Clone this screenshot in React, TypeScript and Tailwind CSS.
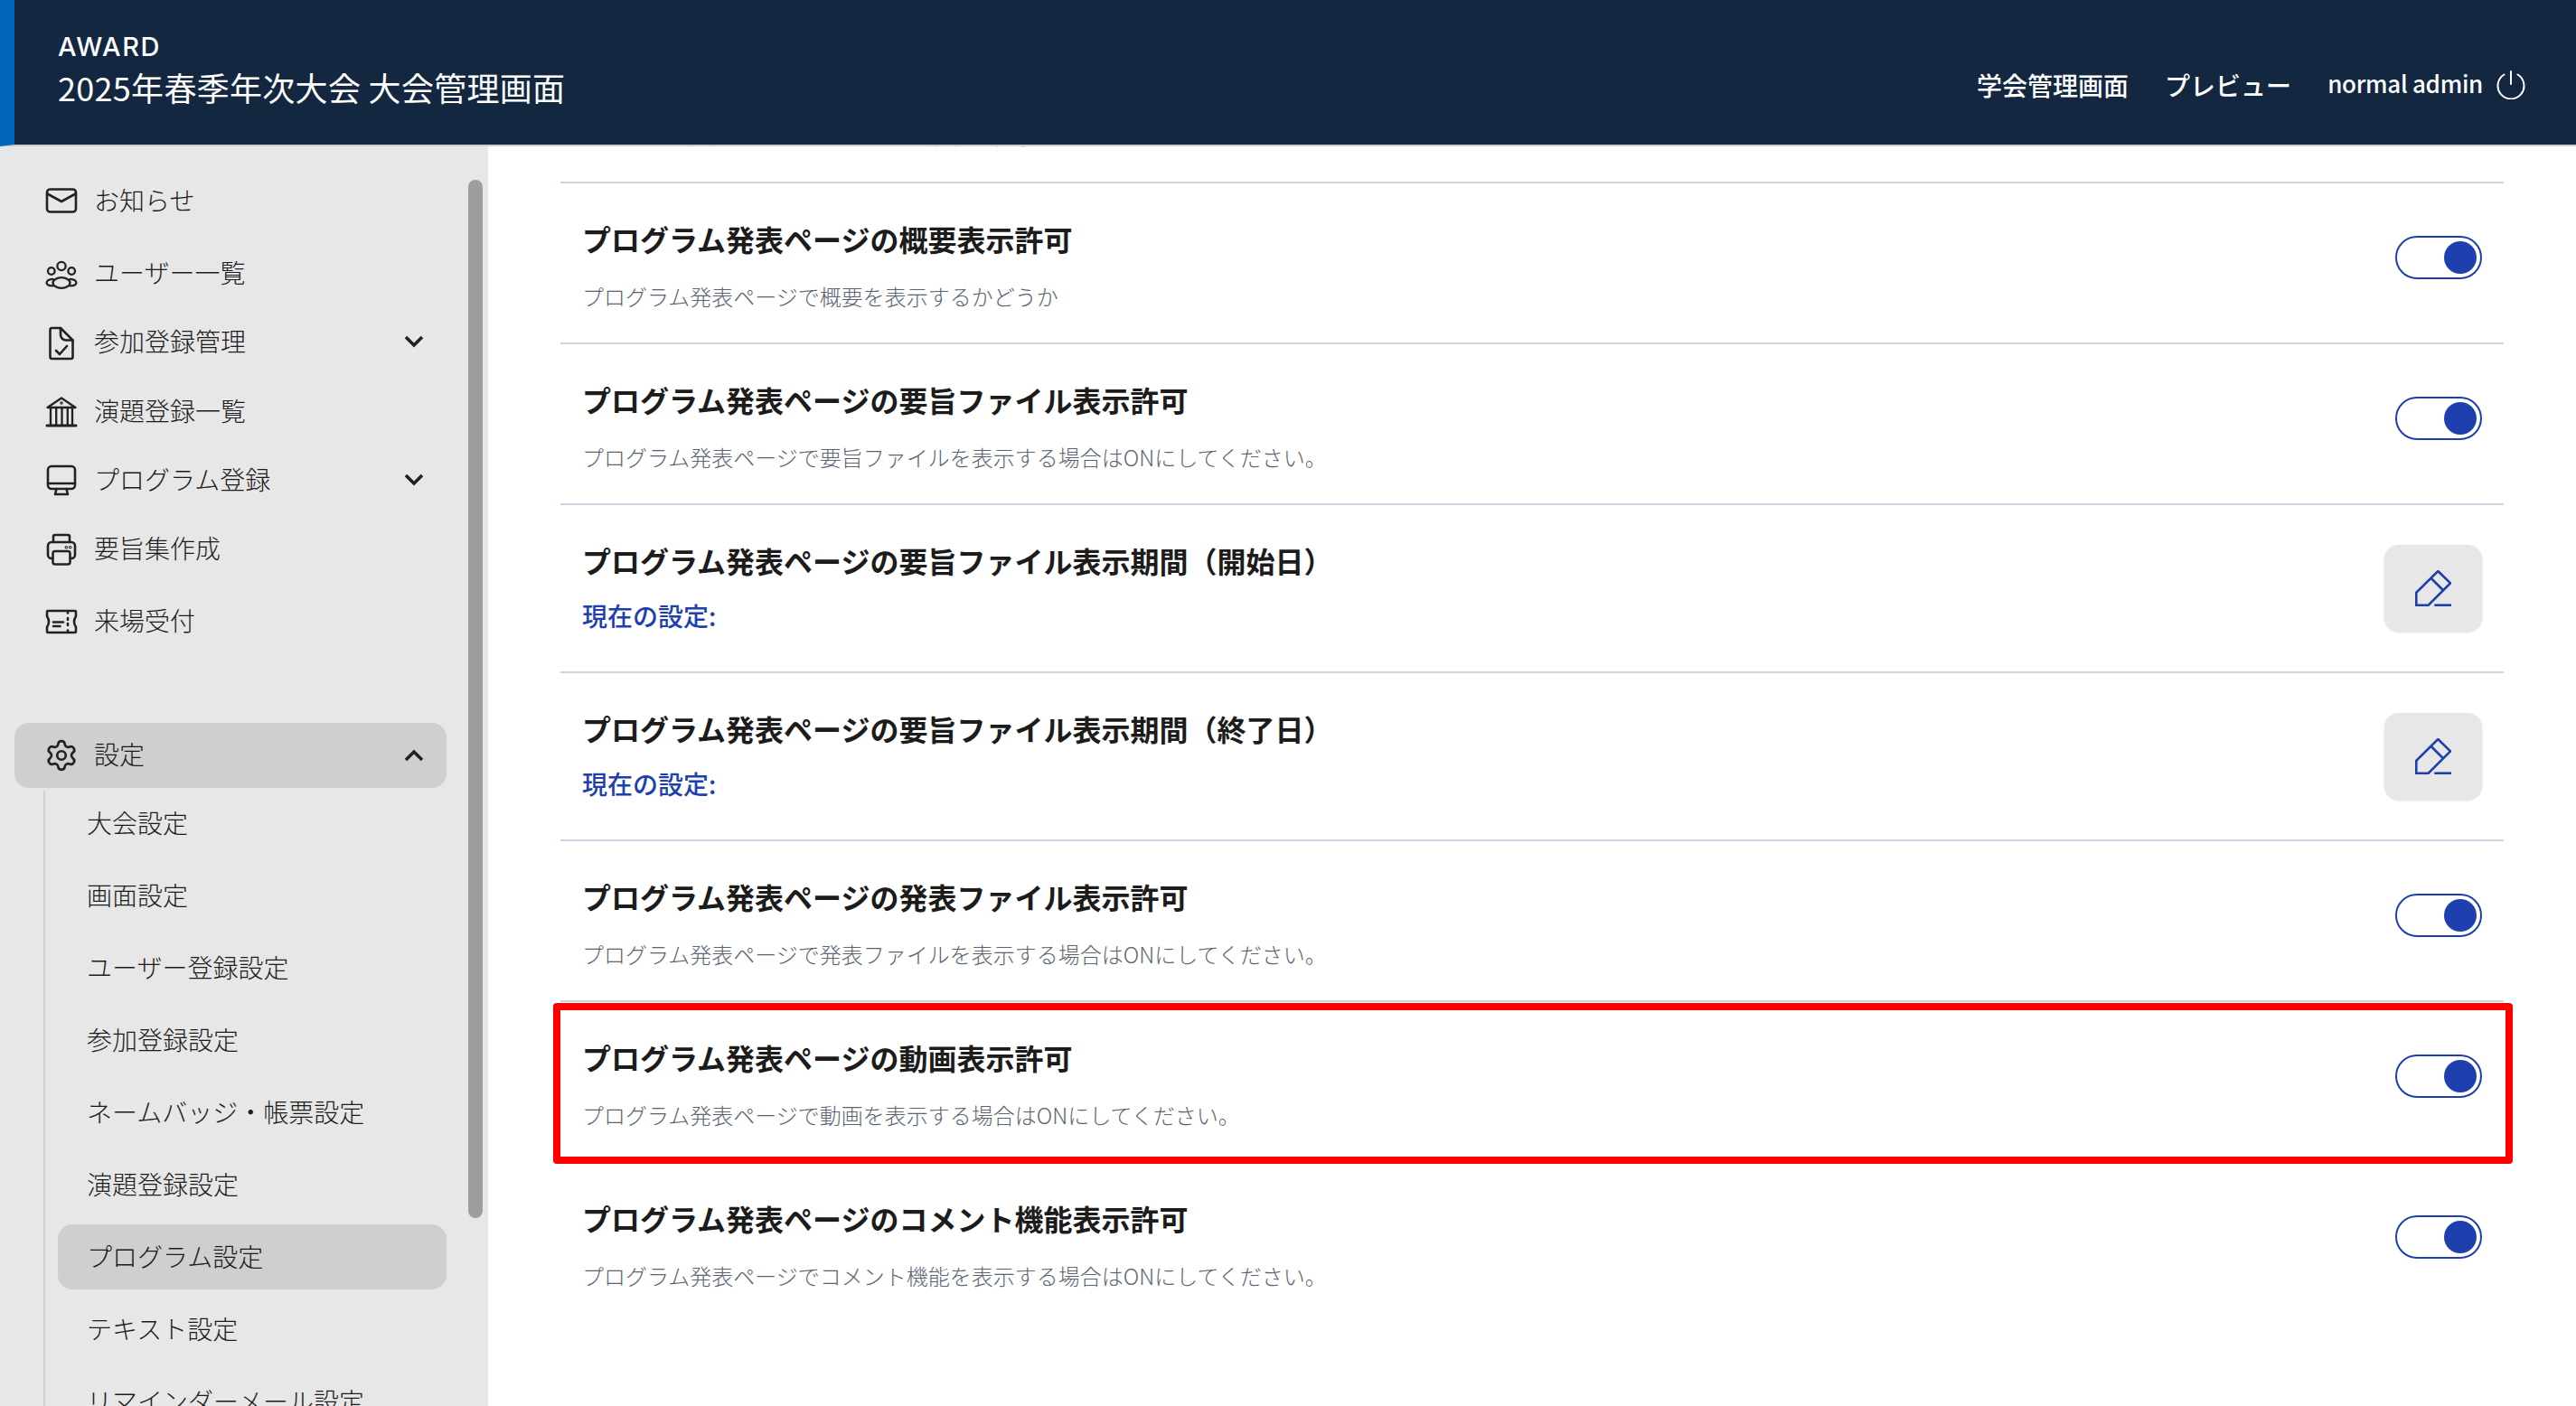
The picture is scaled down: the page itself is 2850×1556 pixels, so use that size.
import { Settings } from "lucide-react";
import type { ReactNode } from "react";

const iconProps = {
  viewBox: "0 0 36 36",
  fill: "none",
  stroke: "currentColor",
  strokeWidth: 2.6,
  strokeLinecap: "round" as const,
  strokeLinejoin: "round" as const,
  className: "h-9 w-9 shrink-0 overflow-visible text-[#222222]",
};

const MailIcon = () => (
  <svg {...iconProps}>
    <rect x="2" y="5.5" width="32" height="25" rx="3.5" />
    <path d="M2.5 10.5 18 19l15.5-8.5" />
  </svg>
);

const UsersIcon = () => (
  <svg {...iconProps} strokeWidth={2.3}>
    <circle cx="18" cy="10.5" r="4.6" />
    <circle cx="6.8" cy="16" r="3.8" />
    <circle cx="29.2" cy="16" r="3.8" />
    <ellipse cx="18" cy="29" rx="9.5" ry="5.8" />
    <path d="M8.6 24.8C4.4 25 1.6 26.8 1.6 29c0 1.8 2 3.2 6.6 3.4M27.4 24.8c4.2.2 7 2 7 4.2 0 1.8-2 3.2-6.6 3.4" />
  </svg>
);

const FileCheckIcon = () => (
  <svg {...iconProps}>
    <g transform="translate(0 2)">
      <path d="M5.5 3a2 2 0 0 1 2-2h9.5l13.5 13.5V33a2 2 0 0 1-2 2h-21a2 2 0 0 1-2-2Z" />
      <path d="M17 1v7.5a6 6 0 0 0 6 6h7.5" />
      <path d="m12 26 4 4 8-9" />
    </g>
  </svg>
);

const BankIcon = () => (
  <svg {...iconProps} strokeWidth={2.3}>
    <path d="M2.5 14 18 3.5 33.5 14Z" />
    <path d="M6 14v19M12.2 14v19M18.5 14v19M24.8 14v19M30 14v19" />
    <path d="M2 34h32" strokeWidth={3} />
    <circle cx="18" cy="9" r="0.6" />
  </svg>
);

const ImacIcon = () => (
  <svg {...iconProps}>
    <rect x="3" y="3" width="30" height="25" rx="4" />
    <path d="M3 22h30" />
    <path d="m12.5 28-1.5 6h14l-1.5-6" />
  </svg>
);

const PrinterIcon = () => (
  <svg {...iconProps}>
    <g transform="translate(0 1)">
      <path d="M9 10V4a2 2 0 0 1 2-2h14a2 2 0 0 1 2 2v6" />
      <path d="M8 28H7a4 4 0 0 1-4-4V14a4 4 0 0 1 4-4h22a4 4 0 0 1 4 4v10a4 4 0 0 1-4 4h-1" />
      <rect x="8.5" y="20" width="19" height="14.5" rx="2.5" />
      <circle cx="23.3" cy="15.7" r="0.5" />
      <circle cx="27.7" cy="15.7" r="0.5" />
    </g>
  </svg>
);

const TicketIcon = () => (
  <svg {...iconProps}>
    <g transform="translate(0 1)">
      <path d="M3 6h30a1 1 0 0 1 1 1v5q-4 6 0 12v5a1 1 0 0 1-1 1H3a1 1 0 0 1-1-1v-5q4-6 0-12V7a1 1 0 0 1 1-1Z" />
      <path d="M25 7v1.5M25 14v2M25 20v2M25 27.5V29" />
      <path d="M9 18.5h11M9 23h7.5" />
    </g>
  </svg>
);

const Chevron = ({ up = false }: { up?: boolean }) => (
  <svg viewBox="0 0 22 14" fill="none" stroke="currentColor" strokeWidth="3.6" className="h-[14px] w-[22px] text-[#222222]">
    <path d={up ? "M2 12l9-9 9 9" : "M2 2l9 9 9-9"} />
  </svg>
);

const PowerIcon = () => (
  <svg viewBox="0 0 32 32" fill="none" stroke="currentColor" strokeWidth="2" strokeLinecap="round" className="h-8 w-8 text-white">
    <path d="M16 1v14" />
    <path d="M8.5 4.5a14.5 14.5 0 1 0 15 0" />
  </svg>
);

const EditIcon = () => (
  <svg viewBox="0 0 40 40" fill="none" stroke="currentColor" strokeWidth="2.6" className="h-10 w-10 text-[#1e40af]">
    <path d="M25.3 1 39 14.3 14.7 38.7H1.3V24.7Z" />
    <path d="m17.3 8.5 14 14" />
    <path d="M21.3 38.7H40" />
  </svg>
);

type NavItem = { label: string; icon: ReactNode; gap: string; arrow?: boolean };

const navItems: NavItem[] = [
  { label: "お知らせ", icon: <MailIcon />, gap: "mt-0" },
  { label: "ユーザー一覧", icon: <UsersIcon />, gap: "mt-[4px]" },
  { label: "参加登録管理", icon: <FileCheckIcon />, gap: "mt-0", arrow: true },
  { label: "演題登録一覧", icon: <BankIcon />, gap: "mt-[1px]" },
  { label: "プログラム登録", icon: <ImacIcon />, gap: "mt-0", arrow: true },
  { label: "要旨集作成", icon: <PrinterIcon />, gap: "mt-0" },
  { label: "来場受付", icon: <TicketIcon />, gap: "mt-[4px]" },
];

const subItems = [
  "大会設定",
  "画面設定",
  "ユーザー登録設定",
  "参加登録設定",
  "ネームバッジ・帳票設定",
  "演題登録設定",
  "プログラム設定",
  "テキスト設定",
  "リマインダーメール設定",
];

type Row = { title: string; desc?: string; highlight?: boolean };

const rows: Row[] = [
  { title: "プログラム発表ページの概要表示許可", desc: "プログラム発表ページで概要を表示するかどうか" },
  { title: "プログラム発表ページの要旨ファイル表示許可", desc: "プログラム発表ページで要旨ファイルを表示する場合はONにしてください。" },
  { title: "プログラム発表ページの要旨ファイル表示期間（開始日）" },
  { title: "プログラム発表ページの要旨ファイル表示期間（終了日）" },
  { title: "プログラム発表ページの発表ファイル表示許可", desc: "プログラム発表ページで発表ファイルを表示する場合はONにしてください。" },
  { title: "プログラム発表ページの動画表示許可", desc: "プログラム発表ページで動画を表示する場合はONにしてください。", highlight: true },
  { title: "プログラム発表ページのコメント機能表示許可", desc: "プログラム発表ページでコメント機能を表示する場合はONにしてください。" },
];

const Toggle = () => (
  <div className="mb-3 flex h-12 w-24 items-center justify-end rounded-full border-2 border-[#1e40af] bg-white pr-1">
    <div className="h-9 w-9 rounded-full bg-[#1e40af]" />
  </div>
);

const SettingRow = ({ row, last }: { row: Row; last: boolean }) => {
  const isDate = !row.desc;
  return (
    <div
      className={`relative flex items-center justify-between border-b-2 px-6 ${isDate ? "h-[186px]" : "h-[178px]"} ${
        last ? "border-transparent" : "border-slate-300"
      }`}
    >
      <div className="self-start pt-[37px]">
        <div className="h-12 text-[32px] leading-[48px] font-bold text-[#1c1c1c]">{row.title}</div>
        {isDate ? (
          <div className="mt-4 h-[42px] text-[28px] leading-[42px] font-medium text-[#1e40af]">現在の設定:</div>
        ) : (
          <div className="mt-[22px] h-9 text-2xl leading-9 font-light text-[#5b6472]">{row.desc}</div>
        )}
      </div>
      {isDate ? (
        <button className="flex h-24 w-[108px] items-center justify-center rounded-2xl bg-[#e7e7e7] shadow-sm">
          <EditIcon />
        </button>
      ) : (
        <Toggle />
      )}
      {row.highlight && (
        <div className="absolute top-[1px] right-[-10px] bottom-[-3px] left-[-8px] rounded border-8 border-[#ff0000]" />
      )}
    </div>
  );
};

export default function App() {
  return (
    <div className="flex h-screen w-full flex-col overflow-hidden bg-white font-['Noto_Sans_CJK_JP','Noto_Sans',sans-serif]">
      <header className="flex h-[162px] shrink-0 justify-between border-b-2 border-l-16 border-b-[#cccccc] border-l-[#0066bb] bg-[#132740] pr-14 pl-12 text-white">
        <div className="pt-9">
          <div className="h-8 font-['Inter',sans-serif] text-[29px] leading-8 font-medium tracking-[1.5px]">AWARD</div>
          <div className="mt-[1px] text-4xl leading-[54px] tracking-[0.3px]">2025年春季年次大会 大会管理画面</div>
        </div>
        <div className="flex items-center gap-10 pt-7 text-[28px] font-medium">
          <span>学会管理画面</span>
          <span>プレビュー</span>
          <div className="flex items-center gap-[15px]">
            <span className="-mt-[6px] text-[26px] font-medium tracking-[-0.3px]">normal admin</span>
            <PowerIcon />
          </div>
        </div>
      </header>

      <div className="flex min-h-0 flex-1">
        <aside className="relative w-[540px] shrink-0 overflow-hidden bg-[#e7e7e7] pt-[22px] text-[28px] font-light text-[#1c1c1c]">
          <div className="absolute top-[37px] left-[518px] h-[1149px] w-4 rounded-full bg-[#9e9e9e]" />
          <nav className="w-[494px]">
            {navItems.map((item) => (
              <div key={item.label} className={`flex h-[76px] items-center gap-[18px] pr-[25px] pl-[50px] ${item.gap}`}>
                {item.icon}
                <span className="flex-1 pb-[2px]">{item.label}</span>
                {item.arrow && <Chevron />}
              </div>
            ))}
            <div className="mt-[75px] ml-4 flex h-[72px] items-center gap-[17px] rounded-2xl bg-[#cfcfcf] pr-[25px] pl-[33px]">
              <Settings className="h-[38px] w-[38px] shrink-0 text-[#222222]" strokeWidth={1.7} />
              <span className="flex-1 pb-1">設定</span>
              <Chevron up />
            </div>
            <div className="mt-[3px] ml-[48px] flex flex-col gap-2 border-l-2 border-[#d1d1d1]">
              {subItems.map((label) => (
                <div
                  key={label}
                  className={`ml-[14px] flex h-[72px] shrink-0 items-center rounded-2xl pb-[3px] pl-8 ${
                    label === "プログラム設定" ? "bg-[#cfcfcf]" : ""
                  }`}
                >
                  {label}
                </div>
              ))}
            </div>
          </nav>
        </aside>

        <main className="min-w-0 flex-1 overflow-hidden px-20">
          <div className="-mt-[137px]">
            <div className="flex h-[178px] border-b-2 border-slate-300 px-6">
              <div className="pt-[37px]">
                <div className="h-12 text-[32px] leading-[48px] font-bold text-[#1c1c1c]">プログラム発表ページの表示許可</div>
                <div className="mt-[22px] h-9 text-2xl leading-9 font-light text-[#5b6472]">プログラム発表ページでセッション情報を表示するかどうか</div>
              </div>
            </div>
            {rows.map((row, i) => (
              <SettingRow key={row.title} row={row} last={i === rows.length - 1} />
            ))}
          </div>
        </main>
      </div>
    </div>
  );
}
